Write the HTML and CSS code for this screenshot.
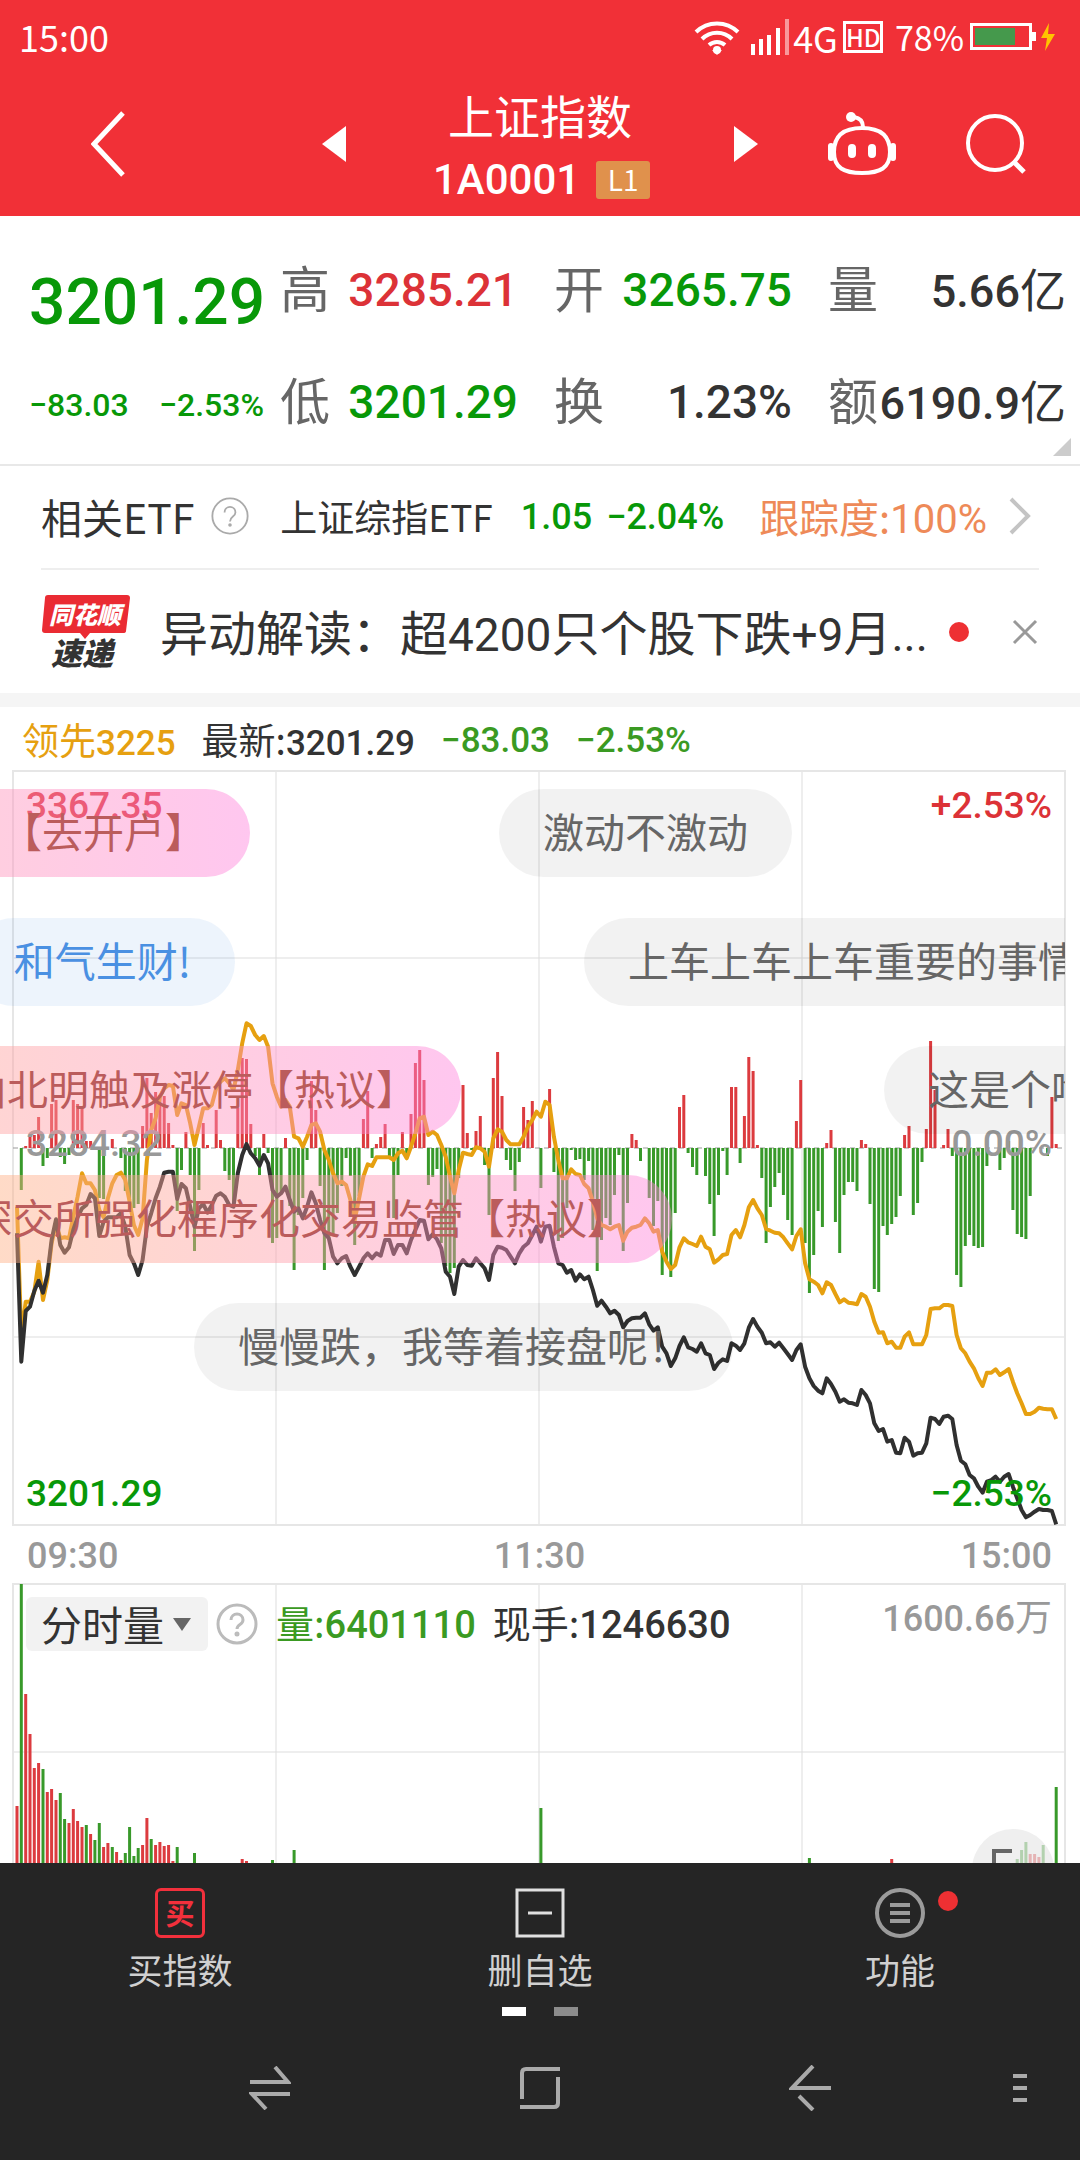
FILE: index.html
```html
<!DOCTYPE html>
<html lang="zh-CN">
<head>
<meta charset="utf-8">
<meta name="viewport" content="width=device-width, initial-scale=1">
<title>上证指数 1A0001</title>
<link rel="stylesheet" href="styles.css">
</head>
<body>
<div class="app">
  <header class="top">
    <div class="status">
      <span>15:00</span>
      <div class="status-right">
        <svg class="wifi" width="46" height="36" viewBox="0 0 46 36" fill="none" stroke="#fff" stroke-width="4"><path d="M2 13a30 30 0 0 1 42 0M8 20a21 21 0 0 1 30 0M15 26a12 12 0 0 1 16 0"/><path d="M18 31h10l-5 5z" fill="#fff" stroke="none"/><circle cx="23" cy="31" r="4" fill="#fff" stroke="none"/></svg>
        <svg width="40" height="36" viewBox="0 0 40 36" fill="#fff"><path d="M1 25h4v11H1zM9 20h4v16H9zM17 16h4v20h-4zM26 9h4v27h-4z"/><path d="M35 0h4v36h-4z" opacity=".5"/></svg>
        <span class="net">4G</span>
        <span class="hd">HD</span>
        <span class="percent">78%</span>
        <svg width="86" height="30" viewBox="0 0 86 30"><rect x="1.500" y="2.500" width="59" height="24" fill="none" stroke="#fff" stroke-width="3"/><path d="M62 10h4v9h-4z" fill="#fff"/><path d="M5 6h40v17H5z" fill="#45994c"/><path d="M79 1 71 16h6l-2 13 10-17h-7z" fill="#ffc400"/></svg>
      </div>
    </div>
    <div class="titlebar">
      <div class="side side-left">
        <button class="icon-btn" aria-label="返回"><svg width="34" height="66" viewBox="0 0 34 66" fill="none" stroke="#fff" stroke-width="5"><path d="M32 2 3 33l29 31"/></svg></button>
        <button class="icon-btn" aria-label="上一个"><svg width="24" height="36" viewBox="0 0 24 36" fill="#fff"><path d="M24 0v36L0 18z"/></svg></button>
      </div>
      <div class="title">
        <h1>上证指数</h1>
        <div class="code"><span class="num">1A0001</span><span class="level">L1</span></div>
      </div>
      <div class="side side-right">
        <button class="icon-btn" aria-label="下一个"><svg width="24" height="36" viewBox="0 0 24 36" fill="#fff"><path d="M0 0v36l24-18z"/></svg></button>
        <button class="icon-btn" aria-label="智能助手"><svg width="70" height="64" viewBox="0 0 70 64" fill="none" stroke="#fff" stroke-width="4"><path d="M35 16c18 0 28 7 28 24 0 16-10 21-28 21S7 56 7 40c0-17 10-24 28-24z"/><path d="M36 15c0-6-3-9-9-10"/><path d="M4 34v12M66 34v12" stroke-width="6" stroke-linecap="round"/><circle cx="24" cy="5" r="5" fill="#fff" stroke="none"/><path d="M25 36v6M45 36v6" stroke-width="8" stroke-linecap="round"/></svg></button>
        <button class="icon-btn" aria-label="搜索"><svg width="60" height="60" viewBox="0 0 60 60" fill="none" stroke="#fff" stroke-width="4"><circle cx="29" cy="29" r="27"/><path d="M48 48l10 10" stroke-width="5"/></svg></button>
      </div>
    </div>
  </header>

  <main>
    <section class="quote">
      <div class="price down num">
        <strong>3201.29</strong>
        <div class="change"><span>−83.03</span><span>−2.53%</span></div>
      </div>
      <dl class="stats">
        <div><dt>高</dt><dd class="up num">3285.21</dd></div>
        <div><dt>开</dt><dd class="down num">3265.75</dd></div>
        <div><dt>量</dt><dd><b class="num">5.66</b>亿</dd></div>
        <div><dt>低</dt><dd class="down num">3201.29</dd></div>
        <div><dt>换</dt><dd class="num">1.23%</dd></div>
        <div><dt>额</dt><dd><b class="num">6190.9</b>亿</dd></div>
      </dl>
      <span class="corner"></span>
    </section>

    <a class="etf" href="#etf">
      <span class="etf-title">相关ETF</span>
      <svg class="help" width="38" height="38" viewBox="0 0 42 42" fill="none" stroke="#aaa" stroke-width="2"><circle cx="21" cy="21" r="19.500"/><path d="M15 17c0-8 12-8 12 0 0 5-6 4-6 10"/><circle cx="21" cy="31" r="1" fill="#aaa"/></svg>
      <span class="etf-name">上证综指ETF</span>
      <b class="num down etf-price">1.05</b>
      <b class="num down">−2.04%</b>
      <span class="track">跟踪度:<span class="num">100%</span></span>
      <svg class="chevron" width="22" height="38" viewBox="0 0 22 38" fill="none" stroke="#c4c4c4" stroke-width="4"><path d="M2 2l17 17L2 36"/></svg>
    </a>

    <div class="news">
      <svg class="news-logo" width="90" height="76" viewBox="0 0 90 76"><path d="M7 1h79q3 0 3 3l-4 33q0 2-3 2H49l-5 6-5-6H4q-3 0-3-3L4 4q0-3 3-3z" fill="#ea2b33"/><text x="8" y="30" class="logo-top">同花顺</text><text x="10" y="71" class="logo-bottom">速递</text></svg>
      <a class="headline" href="#news">异动解读：超<span class="num">4200</span>只个股下跌<span class="num">+9</span>月<span class="num">...</span></a>
      <span class="dot"></span>
      <button class="icon-btn" aria-label="关闭"><svg width="26" height="26" viewBox="0 0 26 26" stroke="#999" stroke-width="3"><path d="M2 2l22 22M24 2 2 24"/></svg></button>
    </div>

    <section class="trend">
      <div class="legend">
        <span class="lead">领先<b class="num">3225</b></span>
        <span>最新:<b class="num">3201.29</b></span>
        <b class="num fall">−83.03</b>
        <b class="num fall">−2.53%</b>
      </div>
      <div class="chart price-chart">
        <svg viewBox="0 0 1080 756" preserveAspectRatio="none" aria-label="分时走势">
          <path class="grid" d="M276 0v756M539 0v756M802 0v756M13 188h1052M13 567h1052"/>
          <path class="frame" d="M13 1h1052v754H13z"/>
          <path class="zero" d="M13 378h1052"/>
          <path id="bars-up" class="bar up"/>
          <path id="bars-down" class="bar down"/>
          <path id="line-lead" class="line lead"/>
          <path id="line-price" class="line"/>
        </svg>
        <div class="axis num">
          <div><span class="up">3367.35</span><span class="up">+2.53%</span></div>
          <div class="mid"><span>3284.32</span><span>0.00%</span></div>
          <div><span class="down">3201.29</span><span class="down">−2.53%</span></div>
        </div>
        <div class="barrage">
          <p class="pill hot" style="right:815px">【去开户】</p>
          <p class="pill" style="left:499px">激动不激动</p>
          <p class="pill mine row2" style="right:830px">和气生财!</p>
          <p class="pill row2" style="left:584px">上车上车上车重要的事情</p>
          <p class="pill hot row3" style="right:604px">山北明触及涨停【热议】</p>
          <p class="pill row3" style="left:884px">这是个啥</p>
          <p class="pill hot row4" style="right:393px">深交所强化程序化交易监管【热议】</p>
          <p class="pill row5" style="left:194px">慢慢跌，我等着接盘呢！</p>
        </div>
      </div>
      <div class="times num"><span>09:30</span><span>11:30</span><span>15:00</span></div>
    </section>

    <section class="chart volume-chart">
      <svg viewBox="0 0 1080 340" preserveAspectRatio="none" aria-label="分时量">
        <path class="grid" d="M276 0v340M539 0v340M802 0v340M13 169h1052"/>
        <path class="frame" d="M13 1h1052v338H13z"/>
        <path id="vol-up" class="bar up"/>
        <path id="vol-down" class="bar down"/>
      </svg>
      <div class="vol-head">
        <label class="picker"><select aria-label="指标"><option>分时量</option></select><svg width="18" height="13" viewBox="0 0 18 13" fill="#666"><path d="M0 0h18L9 13z"/></svg></label>
        <svg class="help" width="42" height="42" viewBox="0 0 42 42" fill="none" stroke="#bbb" stroke-width="3"><circle cx="21" cy="21" r="19"/><path d="M15 17c0-8 12-8 12 0 0 5-6 4-6 9"/><circle cx="21" cy="31" r="1" fill="#bbb"/></svg>
        <span class="fall">量:<b class="num">6401110</b></span>
        <span class="deal">现手:<b class="num">1246630</b></span>
        <span class="max"><b class="num">1600.66</b>万</span>
      </div>
      <button class="fab" aria-label="全屏"><svg width="42" height="42" viewBox="0 0 42 42" fill="none" stroke="#666" stroke-width="4"><path d="M2 20V2h18M22 40h18V22"/></svg></button>
    </section>
  </main>

  <footer class="bottom">
    <nav class="tabs">
      <a href="#buy"><span class="buy-icon">买</span>买指数</a>
      <a href="#remove"><svg width="50" height="50" viewBox="0 0 50 50" fill="none" stroke="#e0e0e0" stroke-width="3"><path d="M2 2h46v46H2zM13 25h24"/></svg>删自选</a>
      <a href="#more"><svg width="50" height="50" viewBox="0 0 50 50" fill="none" stroke="#9b9b9b" stroke-width="4"><circle cx="25" cy="25" r="23"/><path d="M15 17h20M15 25h20M15 33h20"/></svg>功能<span class="dot"></span></a>
    </nav>
    <div class="pager"><i class="on"></i><i></i></div>
    <nav class="system">
      <button class="icon-btn" aria-label="切换"><svg width="42" height="44" viewBox="0 0 42 44" fill="none" stroke="#aaa" stroke-width="4"><path d="M1 16h38L26 1M41 28H3l14 15"/></svg></button>
      <button class="icon-btn" aria-label="主页"><svg width="42" height="42" viewBox="0 0 42 42" fill="none" stroke="#aaa" stroke-width="4"><path d="M3 32V6q0-4 4-4h34M39 10v26q0 4-4 4H1"/></svg></button>
      <button class="icon-btn" aria-label="后退"><svg width="42" height="46" viewBox="0 0 42 46" fill="none" stroke="#aaa" stroke-width="4"><path d="M24 1 3 23h39M10 31l14 14"/></svg></button>
      <button class="icon-btn" aria-label="菜单"><svg width="14" height="30" viewBox="0 0 14 30" stroke="#aaa" stroke-width="4"><path d="M0 3h14M0 15h14M0 27h14"/></svg></button>
    </nav>
  </footer>
</div>
<script src="chart.js"></script>
</body>
</html>
```
FILE: styles.css
```css
* { box-sizing: border-box; }

body {
  margin: 0;
  font-family: "Noto Sans CJK SC", "Noto Sans", sans-serif;
  color: #333;
  background: #fff;
}

h1, dl, dd, p { margin: 0; font-weight: 400; }
a { color: inherit; text-decoration: none; }
svg { display: block; flex: none; }

.app { display: flex; flex-direction: column; height: 100vh; overflow: hidden; }
main { flex: 1; min-height: 0; overflow: hidden; }

.up { color: #dc3237; }
.down { color: #089808; }
.fall { color: #3a9a22; }
.num { font-family: Roboto, "Noto Sans CJK SC", sans-serif; font-weight: 500; }
.icon-btn { display: block; padding: 0; border: 0; background: none; }

/* header */
.top { height: 216px; flex: none; background: #f13037; color: #fff; }
.status { display: flex; justify-content: space-between; align-items: center; height: 74px; padding: 0 24px 0 19px; font-size: 36px; line-height: 70px; }
.status > span { padding-bottom: 2px; }
.status-right { display: flex; align-items: center; }
.wifi { margin-right: 10px; }
.net { margin-left: 3px; }
.hd { margin: 0 12px 0 5px; width: 40px; height: 32px; border: 3px solid #fff; font-size: 24px; font-weight: 500; line-height: 25px; text-align: center; }
.percent { margin-right: 6px; font-size: 34px; }
.titlebar { display: grid; grid-template-columns: 1fr auto 1fr; height: 142px; }
.side { display: flex; align-items: center; padding-bottom: 2px; }
.side-left { justify-content: space-between; padding-left: 91px; padding-right: 84px; }
.side-right { gap: 69px; padding-left: 84px; }
.title { width: 220px; text-align: center; }
.title h1 { font-size: 46px; line-height: 60px; padding-top: 10px; height: 74px; }
.code { display: flex; align-items: center; justify-content: center; gap: 16px; padding-left: 3px; font-size: 42px; line-height: 64px; }
.level { width: 54px; height: 38px; border-radius: 3px; background: #e0914c; font-size: 28px; line-height: 37px; }

/* quote */
.quote { position: relative; display: flex; gap: 16px; height: 250px; padding: 39px 14px 0 29px; border-bottom: 2px solid #e8e8e8; }
.price { width: 235px; }
.price strong { display: block; font-size: 64px; font-weight: 500; line-height: 96px; }
.change { display: flex; justify-content: space-between; margin-top: 24px; font-size: 32px; line-height: 60px; }
.stats { flex: 1; display: grid; grid-template-columns: repeat(3, 1fr); column-gap: 36px; grid-auto-rows: 112px; }
.stats > div { display: flex; justify-content: space-between; font-size: 46px; line-height: 64px; }
.stats dt { font-size: 50px; line-height: 62px; color: #666; }
.stats dd { white-space: nowrap; }
.stats dd.num { line-height: 70px; }
.stats b { font-size: 45px; }
.corner { position: absolute; right: 9px; bottom: 8px; border: 9px solid transparent; border-right-color: #ccc; border-bottom-color: #ccc; }

/* related fund */
.etf { display: flex; align-items: center; height: 104px; margin: 0 41px; padding-bottom: 2px; border-bottom: 2px solid #eee; font-size: 41px; white-space: nowrap; }
.etf .help { margin: 0 31px 0 17px; }
.etf-name { font-size: 37px; }
.etf b { padding-top: 2px; font-size: 36px; }
.etf-price { margin: 0 14px 0 28px; }
.track { margin-left: auto; color: #ee8a58; font-size: 40px; }
.track .num { font-weight: 400; }
.chevron { margin: 0 8px 0 22px; }

/* news */
.news { display: flex; align-items: center; height: 137px; padding: 0 42px 14px 41px; box-shadow: inset 0 -14px #f5f5f5; }
.headline { flex: 1; min-width: 0; margin-left: 29px; padding-bottom: 4px; font-size: 48px; white-space: nowrap; }
.headline .num { font-size: 46px; font-weight: 400; }
.news-logo text { font-style: italic; font-weight: 900; }
.logo-top { fill: #fff; font-size: 24px; }
.logo-bottom { fill: #333; font-size: 31px; }
.dot { flex: none; width: 20px; height: 20px; border-radius: 50%; background: #ee3033; }
.news .dot { margin-right: 43px; }

/* trend chart */
.legend { display: flex; align-items: center; gap: 26px; height: 63px; padding: 5px 22px 0; font-size: 37px; line-height: 56px; }
.legend .num { font-size: 35px; }
.lead { color: #e6a010; }
.chart { position: relative; }
.chart > svg { width: 100%; height: 100%; }
.price-chart { height: 756px; }
.grid { stroke: #ddd; stroke-width: 1; fill: none; }
.frame { stroke: #e6e6e6; stroke-width: 2; fill: none; }
.zero { stroke: #999; stroke-width: 1; stroke-dasharray: 5 4; }
.bar { stroke-width: 3; fill: none; }
.bar.up { stroke: #dc3b3f; }
.bar.down { stroke: #38992a; }
.line { fill: none; stroke: #303030; stroke-width: 4; stroke-linejoin: round; }
.line.lead { stroke: #e6a010; }
.axis { position: absolute; inset: 8px 28px 4px 26px; display: flex; flex-direction: column; justify-content: space-between; font-size: 37px; line-height: 56px; }
.axis > div { display: flex; justify-content: space-between; }
.axis .mid { margin-bottom: 12px; color: #999; }
.barrage { position: absolute; inset: 0 15px 0 0; overflow: hidden; }
.pill { position: absolute; top: 19px; height: 88px; padding: 0 44px; border-radius: 44px; background: rgba(0, 0, 0, .05); color: #666; font-size: 41px; line-height: 82px; white-space: nowrap; }
.row2 { top: 148px; }
.row3 { top: 276px; }
.row4 { top: 405px; }
.row5 { top: 533px; }
.hot { background: linear-gradient(to left, rgba(255, 130, 220, .45), rgba(255, 175, 130, .45) 680px); color: #bb5c5c; }
.mine { background: rgba(74, 150, 230, .1); color: #4a90e2; }
.times { display: flex; justify-content: space-between; height: 57px; padding: 0 28px 0 27px; color: #999; font-size: 36px; line-height: 60px; }

/* volume chart */
.volume-chart { height: 340px; }
.vol-head { position: absolute; inset: 14px 28px auto 26px; display: flex; align-items: center; height: 54px; font-size: 38px; line-height: 50px; white-space: nowrap; }
.vol-head > span { padding-bottom: 2px; }
.picker { display: flex; align-items: center; width: 182px; height: 54px; padding: 0 17px 0 15px; border-radius: 6px; background: #f2f2f2; }
.picker select { flex: 1; min-width: 0; height: 54px; padding: 0 0 3px; border: 0; background: none; appearance: none; color: #333; font: 400 41px/50px "Noto Sans CJK SC", sans-serif; }
.vol-head .help { margin: 0 18px 0 8px; }
.vol-head .deal { margin-left: 17px; }
.vol-head .max { margin-left: auto; padding-bottom: 14px; color: #999; font-size: 37px; }
.max .num { font-size: 36px; }
.fab { position: absolute; right: 26px; top: 246px; width: 82px; height: 82px; padding: 20px; border: 0; border-radius: 50%; background: rgba(232, 232, 232, .7); }

/* bottom bars */
.bottom { flex: none; height: 297px; background: #252525; }
.tabs { display: grid; grid-template-columns: repeat(3, 1fr); height: 144px; }
.tabs a { position: relative; display: flex; flex-direction: column; align-items: center; padding-top: 25px; color: #d0d0d0; font-size: 35px; line-height: 62px; }
.buy-icon { width: 50px; height: 50px; border: 3px solid #f2303c; border-radius: 6px; color: #f2303c; font-size: 29px; font-weight: 700; line-height: 42px; text-align: center; }
.tabs .dot { position: absolute; left: calc(50% + 38px); top: 28px; }
.pager { display: flex; justify-content: center; gap: 28px; }
.pager i { width: 24px; height: 9px; background: #8c8c8c; }
.pager .on { background: #fff; }
.system { display: grid; grid-template-columns: 2fr 2fr 2fr 1fr; align-items: center; justify-items: center; height: 144px; padding-left: 135px; }
.system .icon-btn:last-child { justify-self: start; margin-left: 68px; }
```
FILE: chart.js
```js
// One sample per trading minute, 241 in all; y values are thirds of a unit.
const X = i => (17 + i * 4.33).toFixed(1);

const price = [310,695,543,530,483,452,488,435,330,268,345,368,352,300,262,235,225,192,205,318,275,262,262,262,250,290,375,400,435,390,290,250,205,170,128,125,125,207,162,175,230,290,235,222,248,225,197,190,200,225,230,130,75,42,70,85,107,75,100,180,200,190,170,210,245,235,265,230,187,220,270,310,325,380,400,385,378,410,435,410,385,370,385,370,377,330,330,372,345,345,370,330,300,270,272,328,313,328,355,425,440,492,410,390,405,407,385,400,415,450,375,350,353,360,380,400,370,350,340,315,290,335,290,287,350,400,405,428,420,452,433,448,440,480,527,512,530,550,542,555,592,573,565,563,563,550,583,602,592,650,670,708,685,648,622,652,657,665,640,670,675,717,698,688,693,640,647,660,640,593,567,590,608,640,637,650,638,655,672,690,660,643,710,745,768,782,790,745,762,785,815,808,818,820,825,780,795,820,880,903,897,935,930,968,970,923,935,977,970,968,940,863,867,882,860,857,867,945,992,1003,1035,1045,1070,1088,1055,1050,1040,1055,1040,1032,1070,1105,1140,1162,1155,1145,1137,1140,1140,1143,1183];

const lead = [230,620,515,515,485,395,510,450,340,280,325,322,325,260,200,130,160,160,180,240,262,205,160,135,128,150,215,285,315,265,90,0,-35,-100,-125,-135,-132,-45,-80,-75,-20,45,-10,-65,-65,-75,-125,-145,-155,-140,-120,-180,-260,-320,-312,-285,-270,-282,-250,-140,-100,-70,-90,-70,20,25,50,20,-15,-20,5,60,90,130,160,155,165,210,270,205,140,103,108,82,82,82,82,90,70,62,85,50,10,-35,-40,15,5,15,45,80,140,190,120,68,72,75,52,55,65,110,25,-2,5,30,43,43,43,20,-10,-30,-55,-40,-85,-75,20,90,145,145,118,132,135,162,175,215,265,285,290,298,290,285,332,305,293,290,285,265,280,305,300,365,395,417,405,352,325,337,342,348,320,350,358,398,388,375,372,315,300,322,285,232,210,235,255,297,302,308,310,322,340,358,318,298,400,448,455,465,490,457,465,492,517,508,518,520,523,492,500,530,575,608,607,640,635,653,653,620,607,643,643,643,615,537,535,535,525,525,528,615,655,670,695,715,745,768,728,728,718,735,727,717,755,790,820,852,852,845,833,836,838,838,867];

// minute: bar length above (+) or below (-) the zero line
const force = {1:-42,2:2,3:12,4:13,5:31,6:-18,7:-10,8:44,9:48,10:-9,11:-16,12:-7,13:48,14:44,15:40,16:7,17:7,19:-50,20:-51,22:9,24:-10,25:-43,26:-52,27:-60,28:-56,29:22,30:70,31:35,32:56,33:53,34:52,35:25,36:3,37:-63,38:-22,39:16,40:-27,41:-103,42:-42,43:25,44:3,46:38,47:8,48:-23,49:-32,50:-58,51:40,52:90,53:89,54:24,55:-8,56:-27,57:14,58:-5,59:-95,60:-90,61:-45,62:10,63:-58,64:-122,65:-67,66:-50,67:-12,68:67,69:38,70:-38,71:-122,72:-90,73:-87,74:-65,75:-38,76:-10,77:-28,78:-97,79:-48,80:29,81:57,82:-10,83:4,84:11,85:24,86:-10,87:-70,88:-27,89:16,90:-9,91:34,92:85,93:98,94:68,95:-37,96:-29,97:-21,98:-95,99:-118,100:-125,101:-120,102:-30,103:63,104:15,105:-2,106:17,107:32,108:-17,109:-67,110:70,111:96,112:52,113:-12,114:-22,115:-43,116:-14,117:41,118:28,119:47,121:-40,123:59,124:-24,125:-93,126:-90,127:-60,128:-2,129:-12,130:-11,131:-32,132:-13,133:-82,134:-123,135:-92,136:-70,137:-77,138:-47,139:-7,140:-103,141:-55,142:14,143:8,144:-13,146:-50,147:-78,148:-53,149:-127,150:-115,151:-129,152:-65,153:41,154:53,155:-5,156:-19,157:-27,159:-28,160:-56,161:-88,162:-47,163:-3,164:-27,165:61,166:61,167:-15,168:32,169:91,170:77,171:3,172:-30,173:-95,174:-59,175:-39,176:-25,177:-47,178:-72,179:-87,180:27,181:68,182:-95,183:-145,184:-107,185:-63,186:-79,187:5,188:18,189:-74,190:-105,191:-47,192:-34,193:-34,194:-43,195:8,196:4,197:-56,198:-141,199:-144,200:-78,201:-87,202:-76,203:-69,204:-48,205:13,206:22,207:-67,208:-55,209:-14,210:19,211:107,212:58,214:3,215:19,216:-8,217:-127,218:-139,219:-98,220:-87,221:-98,222:-100,223:-99,224:-18,227:-22,228:-10,229:7,230:-62,231:-86,232:-89,233:-91,234:-48,238:-8,239:51,240:4};

// minute: top of the volume bar, negative for a falling minute
const volume = {0:223,1:-1,2:111,3:151,4:185,5:180,6:-186,7:209,8:206,9:217,10:-210,11:-236,12:240,13:226,14:238,15:244,16:-242,17:251,18:-257,19:-240,20:264,21:260,22:-264,23:269,24:277,25:-270,26:-244,27:-273,28:-265,29:262,30:235,31:-256,32:262,33:259,34:263,35:262,36:278,37:-264,41:-270,52:276,53:278,59:-277,64:-267,121:-225,183:-275,202:276,231:-276,232:-267,233:-259,234:271,235:271,236:274,237:-262,240:-204};

const draw = (id, d) => document.getElementById(id).setAttribute("d", d);
const line = ys => "M" + ys.map((y, i) => X(i) + " " + (360 + y / 3).toFixed(1)).join("L");
const bars = (data, sign, seg) => Object.entries(data)
  .filter(([, v]) => v * sign > 0)
  .map(([i, v]) => "M" + X(i) + seg(v)).join("");

draw("line-price", line(price));
draw("line-lead", line(lead));
draw("bars-up", bars(force, 1, v => " 378v" + -v));
draw("bars-down", bars(force, -1, v => " 378v" + -v));
draw("vol-up", bars(volume, 1, v => " " + v + "V340"));
draw("vol-down", bars(volume, -1, v => " " + -v + "V340"));
```
